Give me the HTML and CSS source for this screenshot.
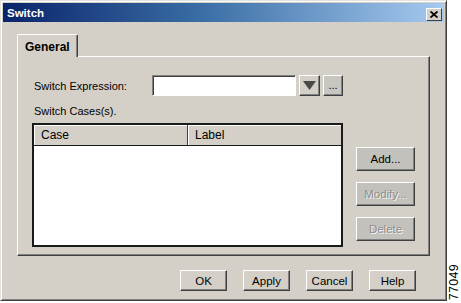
FILE: index.html
```html
<!DOCTYPE html>
<html lang="en">
  <head>
    <meta charset="UTF-8" />
    <title>Switch</title>
    <link rel="stylesheet" href="styles.css">
  </head>
  <body>
    <div class="page">
      <div class="window">
        <div class="titlebar">
          <span class="title">Switch</span>
          <span class="close">
            <svg width="8" height="7" viewBox="0 0 8 7">
              <path d="M0.5 0.5 L7.5 6.5 M7.5 0.5 L0.5 6.5" stroke="#000" stroke-width="1.8" fill="none" />
            </svg>
          </span>
        </div>

        <div class="content">
          <div class="tabs">
            <div class="tab">General</div>
          </div>
          <div class="panel">
            <div class="expr-row">
              <label class="expr-label">Switch Expression:</label>
              <div class="textbox"></div>
              <span class="btn drop">
                <svg width="13" height="9" viewBox="0 0 13 9">
                  <path d="M0 0 H13 L6.5 9 Z" fill="#4a4a4a" />
                </svg>
              </span>
              <span class="btn dots">...</span>
            </div>

            <div class="cases-label">Switch Cases(s).</div>

            <div class="cases-row">
              <div class="list">
                <div class="list-head">
                  <span class="col col-case">Case</span>
                  <span class="col col-label">Label</span>
                </div>
                <div class="list-body"></div>
              </div>
              <div class="side-buttons">
                <span class="btn side">Add...</span>
                <span class="btn side disabled">Modify...</span>
                <span class="btn side disabled">Delete</span>
              </div>
            </div>
          </div>

          <div class="footer">
            <span class="btn foot">OK</span>
            <span class="btn foot">Apply</span>
            <span class="btn foot">Cancel</span>
            <span class="btn foot">Help</span>
          </div>
        </div>
      </div>
      <div class="figure-no"><span>77049</span></div>
    </div>
  </body>
</html>
```

FILE: styles.css
```css
body {
  margin: 0;
  background-color: #fff;
  font-family: 'Liberation Sans', Arial, sans-serif;
  font-size: 11px;
  color: #000;
}
.page {
  display: flex;
  width: 461px;
  height: 303px;
}
.window {
  width: 447px;
  height: 301px;
  box-sizing: border-box;
  padding: 2px;
  background-color: #d4d0c8;
  border: 1px solid;
  border-color: #e4e2dc #404040 #404040 #e4e2dc;
  box-shadow: inset 1px 1px 0 #fff, inset -1px -1px 0 #808080;
}
.titlebar {
  display: flex;
  align-items: center;
  height: 19px;
  padding: 0 2px 0 4px;
  background: linear-gradient(to right, #0a246a 0%, #3a6ea5 45%, #a6caf0 100%);
}
.title {
  flex: 1;
  color: #fff;
  font-weight: bold;
  font-size: 11.5px;
  margin-top: 1px;
}
.close {
  display: flex;
  align-items: center;
  justify-content: center;
  width: 16px;
  height: 13px;
  box-sizing: border-box;
  margin-top: 3px;
  background-color: #d4d0c8;
  border: 1px solid;
  border-color: #fff #404040 #404040 #fff;
}
.content {
  padding: 12px 14px 0 14px;
}
.tabs {
  display: flex;
}
.tab {
  position: relative;
  z-index: 1;
  width: 61px;
  height: 23px;
  box-sizing: border-box;
  margin-bottom: -1px;
  padding: 5px 0 0 7px;
  font-weight: bold;
  font-size: 12px;
  background-color: #d4d0c8;
  border-top: 1px solid #fff;
  border-left: 1px solid #fff;
  border-right: 1px solid #404040;
  box-shadow: inset -1px 0 0 #808080;
  border-radius: 2px 2px 0 0;
}
.panel {
  width: 413px;
  height: 200px;
  box-sizing: border-box;
  padding: 18px 0 0 14px;
  border: 1px solid;
  border-color: #fff #404040 #404040 #fff;
  box-shadow: inset -1px -1px 0 #808080;
}
.expr-row {
  display: flex;
  align-items: center;
  gap: 3px;
  height: 21px;
}
.expr-label {
  width: 118px;
  padding-left: 2px;
  margin-right: -3px;
}
.textbox {
  width: 144px;
  height: 21px;
  box-sizing: border-box;
  background-color: #fff;
  border: 1px solid;
  border-color: #808080 #fff #fff #808080;
  box-shadow: inset 1px 1px 0 #404040;
}
.btn {
  display: flex;
  align-items: center;
  justify-content: center;
  box-sizing: border-box;
  background-color: #d4d0c8;
  border: 1px solid;
  border-color: #fff #404040 #404040 #fff;
  box-shadow: inset -1px -1px 0 #808080;
}
.drop {
  width: 21px;
  height: 21px;
}
.dots {
  width: 20px;
  height: 21px;
  padding-bottom: 2px;
  background-color: #c8c6c0;
}
.cases-label {
  line-height: 13px;
  margin: 9px 0 5px;
  padding-left: 2px;
}
.cases-row {
  display: flex;
}
.list {
  width: 311px;
  height: 124px;
  box-sizing: border-box;
  border: 2px solid #1a1a1a;
  background-color: #fff;
}
.list-head {
  display: flex;
  height: 20px;
  border-bottom: 1px solid #1a1a1a;
  background-color: #d4d0c8;
  font-size: 12px;
}
.col {
  display: flex;
  align-items: center;
  box-sizing: border-box;
}
.col-case {
  width: 154px;
  padding-left: 7px;
  border-right: 1px solid #404040;
  box-shadow: inset 1px 1px 0 #fff;
}
.col-label {
  flex: 1;
  padding-left: 7px;
  box-shadow: inset 1px 1px 0 #fff;
}
.side-buttons {
  display: flex;
  flex-direction: column;
  gap: 11px;
  margin-left: 13px;
  padding-top: 24px;
}
.side {
  width: 59px;
  height: 24px;
  background-color: #c3c1bc;
  font-size: 11.5px;
}
.disabled {
  color: #8e8e8e;
  text-shadow: 1px 1px 0 #f4f4f4;
}
.footer {
  display: flex;
  justify-content: flex-end;
  gap: 16px;
  padding: 14px 14px 0 0;
}
.foot {
  width: 47px;
  height: 21px;
  font-size: 11.5px;
}
.figure-no {
  display: flex;
  align-items: flex-end;
  justify-content: center;
  width: 14px;
  padding-bottom: 3px;
}
.figure-no span {
  writing-mode: vertical-rl;
  transform: rotate(180deg);
  font-size: 12.5px;
  letter-spacing: 0.3px;
}
```
